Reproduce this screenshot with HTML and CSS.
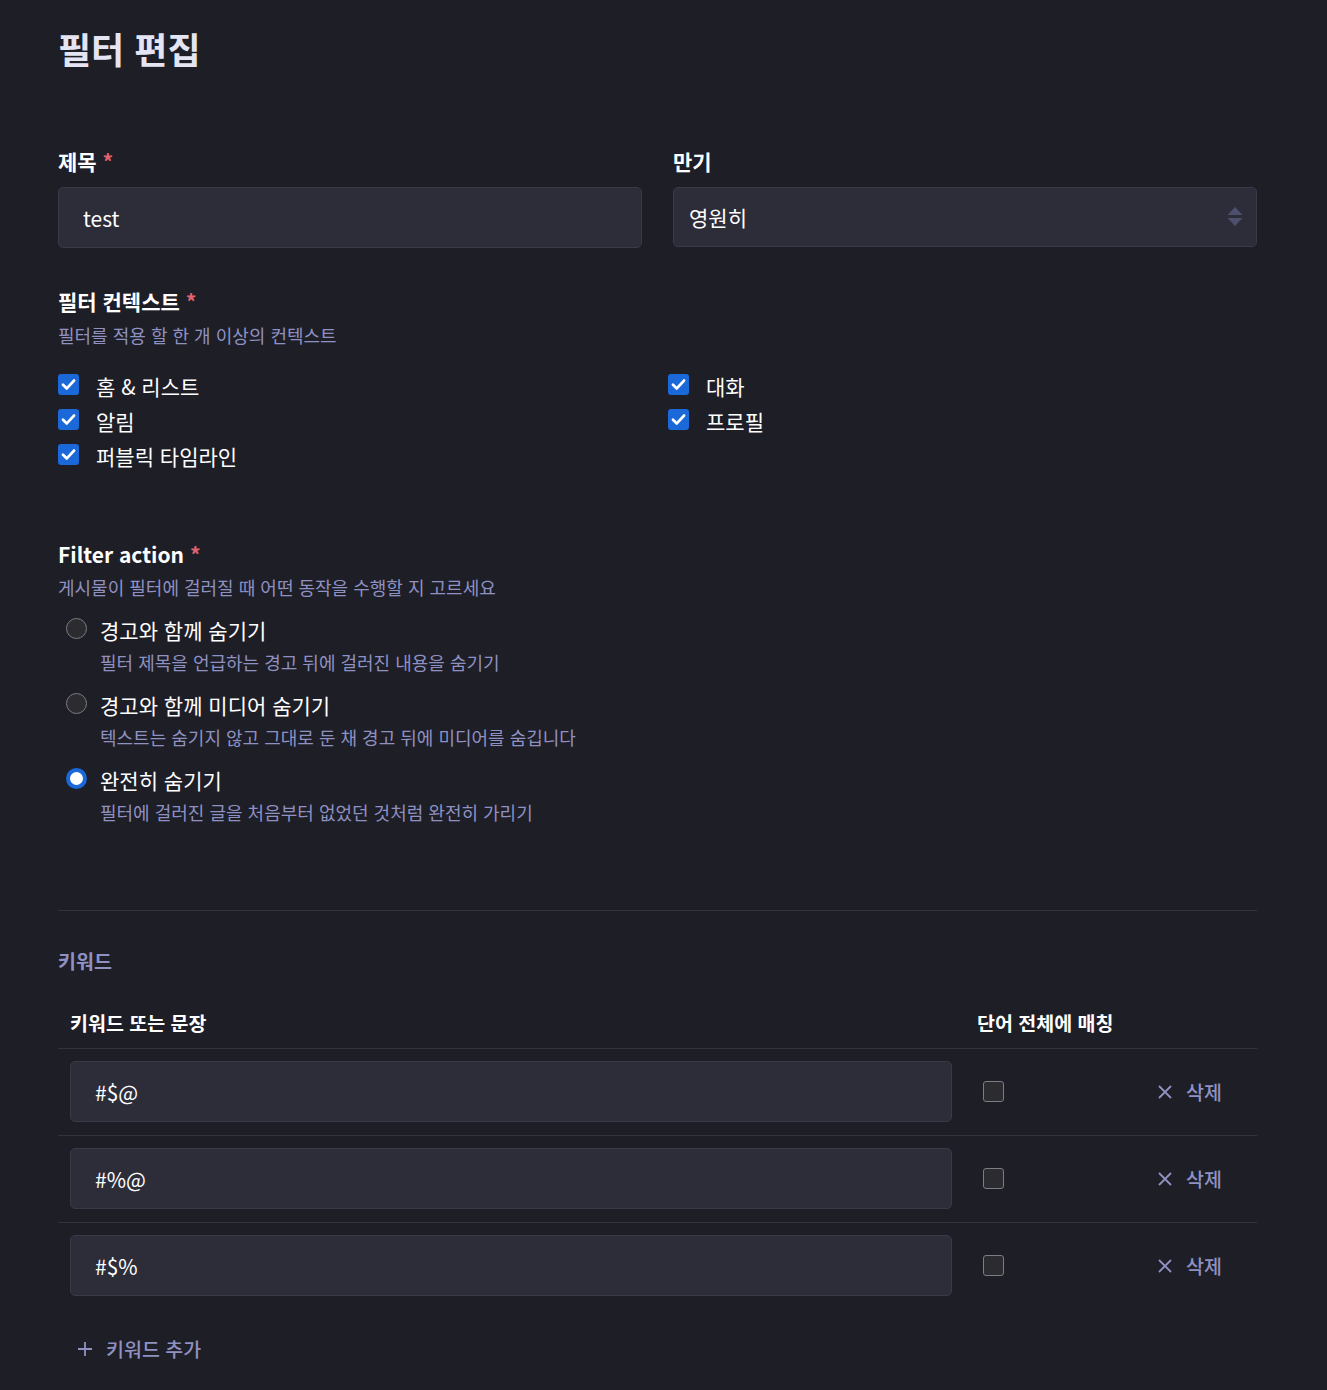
FILE: index.html
```html
<!DOCTYPE html>
<html lang="ko">
<head>
<meta charset="utf-8">
<title>필터 편집</title>
<link rel="stylesheet" href="styles.css">
</head>
<body>
<div class="page">
  <h1 class="title">필터 편집</h1>

  <div class="row2">
    <div class="field">
      <div class="label">제목 <span class="req">*</span></div>
      <div class="input"><span class="input-text">test</span></div>
    </div>
    <div class="field">
      <div class="label">만기</div>
      <div class="input select">
        <span class="input-text">영원히</span>
        <svg class="arrows" width="16" height="22" viewBox="0 0 16 22"><path d="M8 1 L15.5 9 L0.5 9 Z" fill="#4e4f6c"/><path d="M0.5 12 L15.5 12 L8 20 Z" fill="#4e4f6c"/></svg>
      </div>
    </div>
  </div>

  <div class="group context">
    <div class="label">필터 컨텍스트 <span class="req">*</span></div>
    <div class="hint">필터를 적용 할 한 개 이상의 컨텍스트</div>
    <div class="check-grid">
      <div class="check"><span class="box on"><svg width="21" height="21" viewBox="0 0 21 21"><path d="M5 10.8 L8.8 14.4 L16 6.6" fill="none" stroke="#fff" stroke-width="2.8" stroke-linecap="round" stroke-linejoin="round"/></svg></span><span class="check-text">홈 &amp; 리스트</span></div>
      <div class="check"><span class="box on"><svg width="21" height="21" viewBox="0 0 21 21"><path d="M5 10.8 L8.8 14.4 L16 6.6" fill="none" stroke="#fff" stroke-width="2.8" stroke-linecap="round" stroke-linejoin="round"/></svg></span><span class="check-text">대화</span></div>
      <div class="check"><span class="box on"><svg width="21" height="21" viewBox="0 0 21 21"><path d="M5 10.8 L8.8 14.4 L16 6.6" fill="none" stroke="#fff" stroke-width="2.8" stroke-linecap="round" stroke-linejoin="round"/></svg></span><span class="check-text">알림</span></div>
      <div class="check"><span class="box on"><svg width="21" height="21" viewBox="0 0 21 21"><path d="M5 10.8 L8.8 14.4 L16 6.6" fill="none" stroke="#fff" stroke-width="2.8" stroke-linecap="round" stroke-linejoin="round"/></svg></span><span class="check-text">프로필</span></div>
      <div class="check"><span class="box on"><svg width="21" height="21" viewBox="0 0 21 21"><path d="M5 10.8 L8.8 14.4 L16 6.6" fill="none" stroke="#fff" stroke-width="2.8" stroke-linecap="round" stroke-linejoin="round"/></svg></span><span class="check-text">퍼블릭 타임라인</span></div>
    </div>
  </div>

  <div class="group action">
    <div class="label">Filter action <span class="req">*</span></div>
    <div class="hint">게시물이 필터에 걸러질 때 어떤 동작을 수행할 지 고르세요</div>
    <div class="radios">
      <div class="radio-opt">
        <div class="radio-line"><span class="radio"></span><span class="radio-text">경고와 함께 숨기기</span></div>
        <div class="radio-hint">필터 제목을 언급하는 경고 뒤에 걸러진 내용을 숨기기</div>
      </div>
      <div class="radio-opt">
        <div class="radio-line"><span class="radio"></span><span class="radio-text">경고와 함께 미디어 숨기기</span></div>
        <div class="radio-hint">텍스트는 숨기지 않고 그대로 둔 채 경고 뒤에 미디어를 숨깁니다</div>
      </div>
      <div class="radio-opt">
        <div class="radio-line"><span class="radio on"></span><span class="radio-text">완전히 숨기기</span></div>
        <div class="radio-hint">필터에 걸러진 글을 처음부터 없었던 것처럼 완전히 가리기</div>
      </div>
    </div>
  </div>

  <div class="sep"></div>

  <h2 class="kw-title">키워드</h2>

  <div class="kw-table">
    <div class="kw-head">
      <div class="kw-cell first">키워드 또는 문장</div>
      <div class="kw-cell">단어 전체에 매칭</div>
      <div class="kw-cell"></div>
    </div>
    <div class="kw-row">
      <div class="kw-cell first"><div class="input kw-input"><span class="input-text">#$@</span></div></div>
      <div class="kw-cell"><span class="box off"></span></div>
      <div class="kw-cell del"><svg width="14" height="14" viewBox="0 0 14 14"><path d="M1 1 L13 13 M13 1 L1 13" stroke="#8f91c2" stroke-width="1.8"/></svg><span>삭제</span></div>
    </div>
    <div class="kw-row">
      <div class="kw-cell first"><div class="input kw-input"><span class="input-text">#%@</span></div></div>
      <div class="kw-cell"><span class="box off"></span></div>
      <div class="kw-cell del"><svg width="14" height="14" viewBox="0 0 14 14"><path d="M1 1 L13 13 M13 1 L1 13" stroke="#8f91c2" stroke-width="1.8"/></svg><span>삭제</span></div>
    </div>
    <div class="kw-row last">
      <div class="kw-cell first"><div class="input kw-input"><span class="input-text">#$%</span></div></div>
      <div class="kw-cell"><span class="box off"></span></div>
      <div class="kw-cell del"><svg width="14" height="14" viewBox="0 0 14 14"><path d="M1 1 L13 13 M13 1 L1 13" stroke="#8f91c2" stroke-width="1.8"/></svg><span>삭제</span></div>
    </div>
  </div>

  <div class="add"><svg width="14" height="14" viewBox="0 0 14 14"><path d="M7 0 L7 14 M0 7 L14 7" stroke="#8f91c2" stroke-width="1.8"/></svg><span>키워드 추가</span></div>
</div>
</body>
</html>
```

FILE: styles.css
```css
html, body {
  margin: 0;
  padding: 0;
  background: #1e1e27;
}
body {
  font-family: "Noto Sans CJK KR", "Noto Sans", sans-serif;
  color: #ffffff;
  min-height: 1390px;
}
.page {
  width: 1199px;
  margin: 0 0 0 58px;
  padding-top: 28px;
}
.title {
  margin: 0;
  font-size: 36px;
  line-height: 40px;
  font-weight: 700;
  color: #e4e4f2;
}
.row2 {
  display: grid;
  grid-template-columns: 584px 584px;
  column-gap: 31px;
  margin-top: 79px;
}
.label {
  font-size: 21px;
  line-height: 28px;
  font-weight: 700;
  color: #ffffff;
}
.req {
  color: #e0626f;
  font-size: 21px;
}
.field .label {
  margin-bottom: 12px;
}
.input {
  box-sizing: border-box;
  height: 61px;
  background: #2d2d3a;
  border: 1px solid #393948;
  border-radius: 5px;
  display: flex;
  align-items: center;
  padding-left: 24px;
}
.input-text {
  font-size: 21px;
  color: #ffffff;
}
.select {
  height: 60px;
  padding-left: 15px;
  padding-right: 13px;
  justify-content: space-between;
}
.arrows {
  display: block;
}
.context {
  margin-top: 39px;
}
.hint {
  font-size: 18px;
  line-height: 24px;
  color: #8f91c2;
  margin-top: 8px;
}
.check-grid {
  display: grid;
  grid-template-columns: 610px 1fr;
  grid-auto-rows: 35px;
  margin-top: 21px;
}
.check {
  display: flex;
  align-items: center;
  gap: 17px;
}
.check-text {
  font-size: 21px;
  line-height: 28px;
}
.box {
  box-sizing: border-box;
  width: 21px;
  height: 21px;
  border-radius: 3px;
  display: block;
  flex: none;
}
.box svg {
  display: block;
}
.box.on {
  background: #1b68d9;
  margin-top: -3px;
}
.box.off {
  background: #2b2b30;
  border: 1px solid #7c7c84;
  margin-left: 6px;
}
.action {
  margin-top: 67px;
}
.action .hint {
  margin-top: 7px;
}
.radios {
  margin-top: 16px;
  display: flex;
  flex-direction: column;
  gap: 16px;
}
.radio-line {
  display: flex;
  align-items: center;
  gap: 13px;
  height: 30px;
  padding-left: 8px;
}
.radio {
  box-sizing: border-box;
  width: 21px;
  height: 21px;
  border-radius: 50%;
  background: #2b2b30;
  border: 1px solid #7c7c84;
  flex: none;
  margin-top: -3px;
}
.radio.on {
  background: #ffffff;
  border: 4px solid #1b68d9;
}
.radio-text {
  font-size: 21px;
  line-height: 30px;
}
.radio-hint {
  font-size: 18px;
  line-height: 24px;
  color: #8f91c2;
  margin-top: 5px;
  padding-left: 42px;
}
.sep {
  height: 1px;
  background: #33333f;
  margin-top: 86px;
}
.kw-title {
  margin: 37px 0 0 0;
  font-size: 19.5px;
  line-height: 26px;
  font-weight: 700;
  color: #8f91c2;
}
.kw-table {
  margin-top: 24px;
}
.kw-head,
.kw-row {
  display: grid;
  grid-template-columns: 907px 180px 112px;
}
.kw-head {
  border-bottom: 1px solid #33333f;
}
.kw-head .kw-cell {
  padding: 12px;
  font-size: 19.5px;
  line-height: 26px;
  font-weight: 700;
  white-space: nowrap;
}
.kw-row {
  border-bottom: 1px solid #33333f;
  align-items: center;
}
.kw-row.last {
  border-bottom: none;
}
.kw-row .kw-cell {
  padding: 12px 12px 13px 12px;
}
.kw-row .kw-cell.first {
  padding-right: 13px;
}
.kw-input {
  width: 100%;
}
.del {
  display: flex;
  align-items: center;
  justify-content: flex-end;
  gap: 14px;
  color: #8f91c2;
  font-size: 19.5px;
  line-height: 26px;
  font-weight: 500;
  white-space: nowrap;
}
.kw-row .kw-cell.del {
  padding-right: 35px;
  padding-left: 0;
}
.del svg {
  display: block;
}
.add {
  margin-top: 27px;
  padding-left: 20px;
  display: flex;
  align-items: center;
  gap: 14px;
  color: #8f91c2;
  font-size: 19.5px;
  line-height: 26px;
  font-weight: 500;
}
.add svg {
  display: block;
}
```
